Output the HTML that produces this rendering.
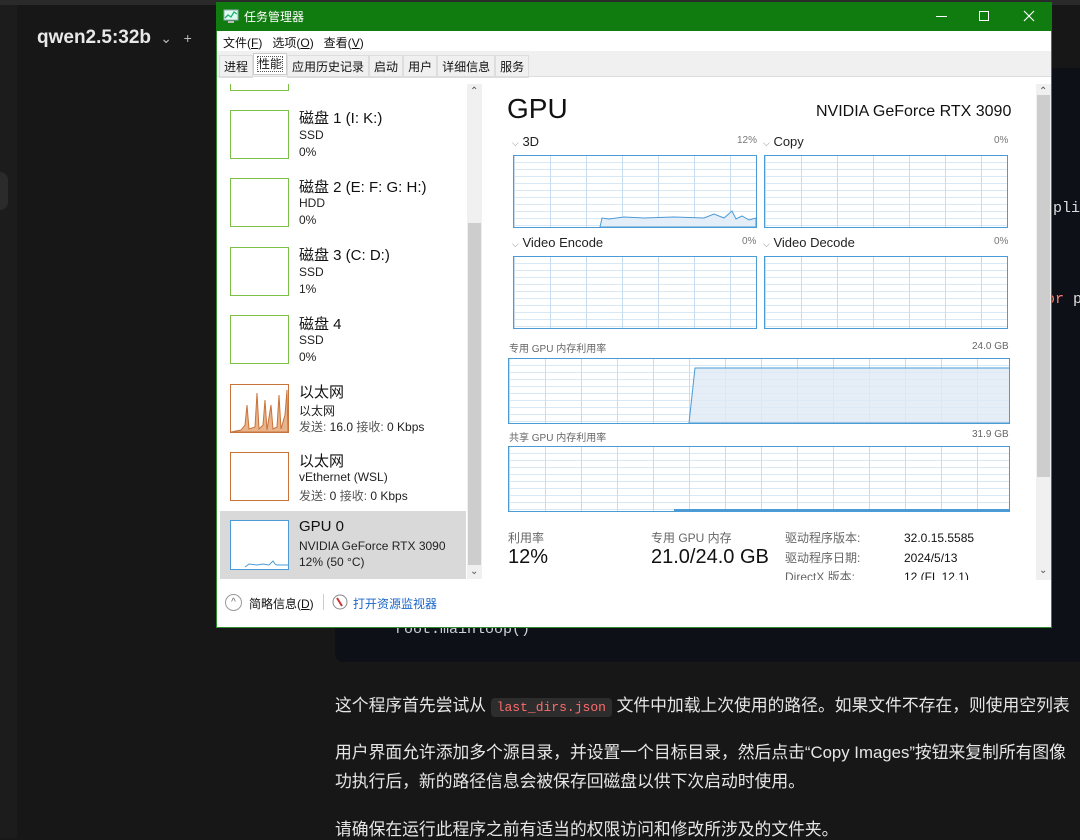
<!DOCTYPE html>
<html><head><meta charset="utf-8"><style>
*{margin:0;padding:0;box-sizing:border-box}
body{width:1080px;height:838px;overflow:hidden;background:#171717;font-family:"Liberation Sans","Noto Sans CJK SC",sans-serif;position:relative}
.a{position:absolute}
.t{position:absolute;white-space:nowrap}
.thumb{position:absolute;left:230px;width:59px;height:49px;border:1.5px solid #7cc04a;background:#fff}
.name{font-size:15px;color:#111}
.sub{font-size:12px;color:#222}
.g{position:absolute;border:1.5px solid #4a9bd6;background:#fff}
.lbl{font-size:13px;color:#222}
.pct{font-size:10px;color:#777}
.p{font-size:16.8px;color:#e6e6e6}
</style></head><body>
<div class="a" style="left:0;top:0;width:1080px;height:5px;background:#2a2a2a"></div>
<div class="a" style="left:0;top:5px;width:17px;height:833px;background:#1c1c1c"></div>
<div class="a" style="left:0;top:172px;width:8px;height:38px;background:#2b2b2b;border-radius:0 8px 8px 0"></div>
<div class="t" style="left:37px;top:27px;font-size:19px;font-weight:bold;color:#e8e8e8">qwen2.5:32b <span style="font-weight:normal;font-size:14px;color:#bbb">&nbsp;⌄ &nbsp;&nbsp;+</span></div>
<div class="a" style="left:335px;top:68px;width:760px;height:594px;background:#0d1117;border-radius:8px"></div>
<div class="t" style="left:1044px;top:200px;font-family:'Liberation Mono',monospace;font-size:15px;color:#ddd">spli</div>
<div class="t" style="left:1046px;top:291px;font-family:'Liberation Mono',monospace;font-size:15px;color:#ff7b72">or <span style="color:#ddd">p</span></div>
<div class="t" style="left:395px;top:621px;font-family:'Liberation Mono',monospace;font-size:15px;color:#c9d1d9">root.mainloop()</div>
<div class="t p" style="left:335px;top:692px">这个程序首先尝试从 <span style="background:#2d2d2d;color:#ff6b6b;font-family:'Liberation Mono',monospace;font-size:13px;padding:2px 6px;border-radius:4px">last_dirs.json</span> 文件中加载上次使用的路径。如果文件不存在，则使用空列表</div>
<div class="t p" style="left:335px;top:739px">用户界面允许添加多个源目录，并设置一个目标目录，然后点击“Copy Images”按钮来复制所有图像</div>
<div class="t p" style="left:335px;top:768px">功执行后，新的路径信息会被保存回磁盘以供下次启动时使用。</div>
<div class="t p" style="left:335px;top:816px">请确保在运行此程序之前有适当的权限访问和修改所涉及的文件夹。</div>

<div class="a" style="left:216px;top:2px;width:836px;height:626px;background:#fff;border:1px solid #2e8b2e"></div>
<div class="a" style="left:216px;top:2px;width:836px;height:29px;background:#107c10"></div>
<svg class="a" style="left:223px;top:9px" width="16" height="15"><rect x="1" y="1" width="14" height="10" fill="#dfe" stroke="#9ab" /><polyline points="2,9 5,6 8,8 11,3 14,5" fill="none" stroke="#2a7" stroke-width="1.3"/><rect x="5" y="12" width="6" height="2" fill="#bbb"/></svg>
<div class="t" style="left:244px;top:8px;font-size:12px;color:#fff">任务管理器</div>
<div class="a" style="left:936px;top:16px;width:11px;height:1px;background:#fff"></div>
<div class="a" style="left:979px;top:11px;width:10px;height:10px;border:1px solid #fff"></div>
<svg class="a" style="left:1023px;top:10px" width="12" height="12"><path d="M1 1L11 11M11 1L1 11" stroke="#fff" stroke-width="1.2"/></svg>
<div class="t" style="left:223px;top:34px;font-size:12px;color:#111">文件(<u>F</u>) &nbsp; 选项(<u>O</u>) &nbsp; 查看(<u>V</u>)</div>
<div class="a" style="left:217px;top:51px;width:834px;height:26px;background:#f0f0f0;border-bottom:1px solid #ddd"></div>
<div class="t" style="left:219px;top:55px;font-size:12px;color:#111;display:flex">
<span style="padding:2px 4px;border:1px solid #ddd">进程</span><span style="padding:1px 4px;border:1px solid #ccc;background:#fff;margin-top:-2px;height:22px"><span style="outline:1px dotted #555">性能</span></span><span style="padding:2px 4px;border:1px solid #ddd">应用历史记录</span><span style="padding:2px 4px;border:1px solid #ddd">启动</span><span style="padding:2px 4px;border:1px solid #ddd">用户</span><span style="padding:2px 4px;border:1px solid #ddd">详细信息</span><span style="padding:2px 4px;border:1px solid #ddd">服务</span></div>
<div class="a" style="left:230px;top:84px;width:59px;height:7px;border:1.5px solid #7cc04a;border-top:none"></div>
<div class="thumb" style="top:110px"></div>
<div class="t name" style="left:299px;top:107px">磁盘 1 (I: K:)</div><div class="t sub" style="left:299px;top:128px">SSD</div><div class="t sub" style="left:299px;top:145px">0%</div>
<div class="thumb" style="top:178px"></div>
<div class="t name" style="left:299px;top:176px">磁盘 2 (E: F: G: H:)</div><div class="t sub" style="left:299px;top:196px">HDD</div><div class="t sub" style="left:299px;top:213px">0%</div>
<div class="thumb" style="top:247px"></div>
<div class="t name" style="left:299px;top:244px">磁盘 3 (C: D:)</div><div class="t sub" style="left:299px;top:265px">SSD</div><div class="t sub" style="left:299px;top:282px">1%</div>
<div class="thumb" style="top:315px"></div>
<div class="t name" style="left:299px;top:313px">磁盘 4</div><div class="t sub" style="left:299px;top:333px">SSD</div><div class="t sub" style="left:299px;top:350px">0%</div>
<div class="thumb" style="top:384px;border-color:#c8733a"></div>
<svg class="a" style="left:231px;top:385px" width="57" height="47"><path d="M0 47L10 45L14 40L16 20L18 44L24 42L26 8L28 44L32 40L34 15L36 45L40 20L42 44L46 42L48 10L50 44L54 30L56 5L57 47Z" fill="#e9b48a" stroke="#c8733a" stroke-width="1"/></svg>
<div class="t name" style="left:299px;top:381px">以太网</div><div class="t sub" style="left:299px;top:402px">以太网</div><div class="t sub" style="left:299px;top:418px;color:#555">发送: <span style="color:#222">16.0</span> 接收: <span style="color:#222">0 Kbps</span></div>
<div class="thumb" style="top:452px;border-color:#c8733a"></div>
<div class="t name" style="left:299px;top:450px">以太网</div><div class="t sub" style="left:299px;top:470px">vEthernet (WSL)</div><div class="t sub" style="left:299px;top:487px;color:#555">发送: <span style="color:#222">0</span> 接收: <span style="color:#222">0 Kbps</span></div>
<div class="a" style="left:220px;top:511px;width:246px;height:68px;background:#d9d9d9"></div>
<div class="thumb" style="top:520px;border-color:#4a9bd6;height:50px"></div>
<svg class="a" style="left:231px;top:555px" width="57" height="14"><path d="M14 12L18 9L26 10L32 9L38 10L42 6L44 9L46 10L57 10" fill="none" stroke="#4a9bd6"/></svg>
<div class="t name" style="left:299px;top:518px">GPU 0</div><div class="t sub" style="left:299px;top:539px">NVIDIA GeForce RTX 3090</div><div class="t sub" style="left:299px;top:555px">12% (50 °C)</div>
<div class="a" style="left:467px;top:84px;width:15px;height:495px;background:#f0f0f0"></div>
<div class="a" style="left:468px;top:223px;width:13px;height:342px;background:#cdcdcd"></div>
<div class="t" style="left:470px;top:86px;font-size:10px;color:#555">⌃</div>
<div class="t" style="left:470px;top:566px;font-size:10px;color:#555">⌄</div>
<div class="t" style="left:507px;top:93px;font-size:28px;color:#111">GPU</div>
<div class="t" style="left:816px;top:103px;font-size:16px;color:#111">NVIDIA GeForce RTX 3090</div>
<div class="t lbl" style="left:512px;top:134px"><span style="font-size:9px;color:#888">⌵</span> 3D</div><div class="t pct" style="left:737px;top:135px">12%</div>
<div class="t lbl" style="left:763px;top:134px"><span style="font-size:9px;color:#888">⌵</span> Copy</div><div class="t pct" style="left:994px;top:135px">0%</div>
<div class="t lbl" style="left:512px;top:235px"><span style="font-size:9px;color:#888">⌵</span> Video Encode</div><div class="t pct" style="left:742px;top:236px">0%</div>
<div class="t lbl" style="left:763px;top:235px"><span style="font-size:9px;color:#888">⌵</span> Video Decode</div><div class="t pct" style="left:994px;top:236px">0%</div>
<svg width="0" height="0" style="position:absolute"><defs><pattern id="gr" width="36" height="7" patternUnits="userSpaceOnUse"><rect width="36" height="7" fill="#fff"/><line x1="0" y1="6.5" x2="36" y2="6.5" stroke="#d8e8f4"/><line x1="0.5" y1="0" x2="0.5" y2="7" stroke="#c7dcee"/></pattern></defs></svg>
<svg class="g" style="left:513px;top:155px;width:244px;height:73px"><rect width="244" height="73" fill="url(#gr)"/><path d="M86 71L88 62L95 63L110 61L130 62L160 61L190 62L200 58L210 62L218 55L222 63L228 60L235 64L242 62L242 71Z" fill="#e3eef8" stroke="#4a9bd6"/></svg>
<svg class="g" style="left:764px;top:155px;width:244px;height:73px"><rect width="244" height="73" fill="url(#gr)"/></svg>
<svg class="g" style="left:513px;top:256px;width:244px;height:73px"><rect width="244" height="73" fill="url(#gr)"/></svg>
<svg class="g" style="left:764px;top:256px;width:244px;height:73px"><rect width="244" height="73" fill="url(#gr)"/></svg>
<div class="t" style="left:509px;top:340px;font-size:10px;color:#666">专用 GPU 内存利用率</div><div class="t" style="left:972px;top:341px;font-size:10px;color:#666">24.0 GB</div>
<svg class="g" style="left:508px;top:358px;width:502px;height:66px"><rect width="502" height="66" fill="url(#gr)"/><path d="M180 64L186 9L501 9L501 64Z" fill="#dfeaf5" fill-opacity=".8" stroke="#4a9bd6"/></svg>
<div class="t" style="left:509px;top:429px;font-size:10px;color:#666">共享 GPU 内存利用率</div><div class="t" style="left:972px;top:429px;font-size:10px;color:#666">31.9 GB</div>
<svg class="g" style="left:508px;top:446px;width:502px;height:66px"><rect width="502" height="66" fill="url(#gr)"/><line x1="165" y1="63" x2="502" y2="63" stroke="#4a9bd6" stroke-width="2"/></svg>
<div class="t" style="left:508px;top:529px;font-size:12px;color:#666">利用率</div>
<div class="t" style="left:508px;top:546px;font-size:20px;color:#111">12%</div>
<div class="t" style="left:651px;top:529px;font-size:12px;color:#666">专用 GPU 内存</div>
<div class="t" style="left:651px;top:546px;font-size:20px;color:#111">21.0/24.0 GB</div>
<div class="t" style="left:785px;top:529px;font-size:12px;color:#666;line-height:19.5px">驱动程序版本:<br>驱动程序日期:<br>DirectX 版本:</div>
<div class="t" style="left:904px;top:529px;font-size:12px;color:#111;line-height:19.5px">32.0.15.5585<br>2024/5/13<br>12 (FL 12.1)</div>
<div class="a" style="left:484px;top:580px;width:566px;height:5px;background:#fff"></div>
<div class="a" style="left:1036px;top:84px;width:15px;height:496px;background:#f0f0f0"></div>
<div class="a" style="left:1037px;top:95px;width:13px;height:382px;background:#cdcdcd"></div>
<div class="t" style="left:1039px;top:86px;font-size:10px;color:#555">⌃</div>
<div class="t" style="left:1039px;top:565px;font-size:10px;color:#555">⌄</div>
<div class="a" style="left:225px;top:594px;width:17px;height:17px;border:1px solid #999;border-radius:50%;font-size:10px;color:#666;text-align:center;line-height:15px">^</div>
<div class="t" style="left:249px;top:595px;font-size:12px;color:#111">简略信息(<u>D</u>)</div>
<div class="a" style="left:323px;top:594px;width:1px;height:16px;background:#ccc"></div>
<svg class="a" style="left:332px;top:594px" width="16" height="16"><circle cx="8" cy="8" r="7" fill="#fff" stroke="#888"/><path d="M5 4L10 12" stroke="#c33" stroke-width="2"/></svg>
<div class="t" style="left:353px;top:595px;font-size:12px;color:#1a66c8">打开资源监视器</div>
</body></html>
